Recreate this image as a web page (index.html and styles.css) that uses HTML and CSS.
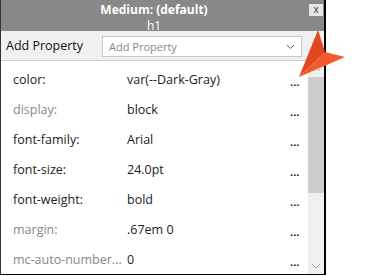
FILE: index.html
```html
<!DOCTYPE html>
<html>
<head>
<title>Medium: (default)</title>
<link rel="stylesheet" href="styles.css">
</head>
<body>
<div class="panel">
    <div class="header">
        <div class="title">
            <div class="name">Medium: (default)</div>
            <div class="tag">h1</div>
        </div>
        <div class="close">x</div>
    </div>
    <div class="addrow">
        <span class="addlabel">Add Property</span>
        <div class="select">
            <span>Add Property</span>
            <svg width="9" height="6" viewBox="0 0 9 6"><path d="M1 1 L4.5 4.5 L8 1" fill="none" stroke="#666" stroke-width="1"/></svg>
        </div>
    </div>
    <div class="content">
        <div class="list">
            <div class="row"><span class="prop">color:</span><span class="val">var(--Dark-Gray)</span><span class="more">...</span></div>
            <div class="row"><span class="prop inherited">display:</span><span class="val">block</span><span class="more">...</span></div>
            <div class="row"><span class="prop">font-family:</span><span class="val">Arial</span><span class="more">...</span></div>
            <div class="row"><span class="prop">font-size:</span><span class="val">24.0pt</span><span class="more">...</span></div>
            <div class="row"><span class="prop">font-weight:</span><span class="val">bold</span><span class="more">...</span></div>
            <div class="row"><span class="prop inherited">margin:</span><span class="val">.67em 0</span><span class="more">...</span></div>
            <div class="row"><span class="prop inherited">mc-auto-number...</span><span class="val">0</span><span class="more">...</span></div>
        </div>
        <div class="scrollbar">
            <svg class="arrow" width="16" height="16" viewBox="0 0 16 16"><path d="M4 10 L8 6 L12 10" fill="none" stroke="#a0a0a0" stroke-width="1"/></svg>
            <div class="thumb"></div>
            <div class="track"></div>
            <svg class="arrow" width="16" height="16" viewBox="0 0 16 16"><path d="M4 6 L8 10 L12 6" fill="none" stroke="#a0a0a0" stroke-width="1"/></svg>
        </div>
    </div>
</div>
<svg class="pointer" width="60" height="60" viewBox="0 0 60 60">
    <polygon points="23,5 30,27 4,52" fill="#e2461e"/>
    <polygon points="30,27 50,32 4,52" fill="#f15a2a"/>
</svg>
</body>
</html>
```

FILE: styles.css
```css
body {
    margin: 0;
    background: #fff;
    font-family: "Open Sans", "Noto Sans", sans-serif;
}

.panel {
    width: 323px;
    height: 274px;
    border-left: 1px solid #333;
    border-right: 2px solid #000;
    border-bottom: 1px solid #000;
    display: flex;
    flex-direction: column;
}

.header {
    height: 31px;
    background: #888;
    display: flex;
    color: #fff;
}

.title {
    flex: 1;
    text-align: center;
    padding-top: 2px;
}

.name {
    font-size: 12px;
    font-weight: bold;
    line-height: 16px;
}

.tag {
    font-size: 12px;
    line-height: 14px;
    padding-top: 1px;
}

.close {
    width: 14px;
    height: 12px;
    margin: 4px 1px 0 2px;
    background: #e6e6e6;
    color: #333;
    font-size: 10px;
    line-height: 11px;
    text-align: center;
}

.addrow {
    height: 31px;
    background: #f0f0f0;
    border-bottom: 1px solid #d0d0d0;
    display: flex;
    align-items: center;
}

.addlabel {
    width: 96px;
    padding-left: 5px;
    font-size: 12.5px;
    color: #111;
}

.select {
    width: 186px;
    height: 19px;
    margin-top: 2px;
    padding: 0 6px;
    background: #fff;
    border: 1px solid #c8c8c8;
    display: flex;
    align-items: center;
    justify-content: space-between;
    font-size: 11px;
    color: #888;
}

.content {
    flex: 1;
    display: flex;
}

.list {
    flex: 1;
    padding-top: 3px;
}

.row {
    height: 30px;
    display: flex;
    align-items: center;
    font-size: 12.5px;
    color: #222;
}

.prop {
    width: 114px;
    padding-left: 12px;
}

.inherited {
    color: #888;
}

.val {
    flex: 1;
}

.more {
    width: 18px;
    font-size: 11px;
    font-weight: bold;
    padding-top: 4px;
}

.scrollbar {
    width: 16px;
    background: #f0f0f0;
    display: flex;
    flex-direction: column;
}

.arrow {
    display: block;
}

.thumb {
    height: 116px;
    background: #cdcdcd;
}

.track {
    flex: 1;
}

.pointer {
    position: absolute;
    left: 295px;
    top: 25px;
}
```
